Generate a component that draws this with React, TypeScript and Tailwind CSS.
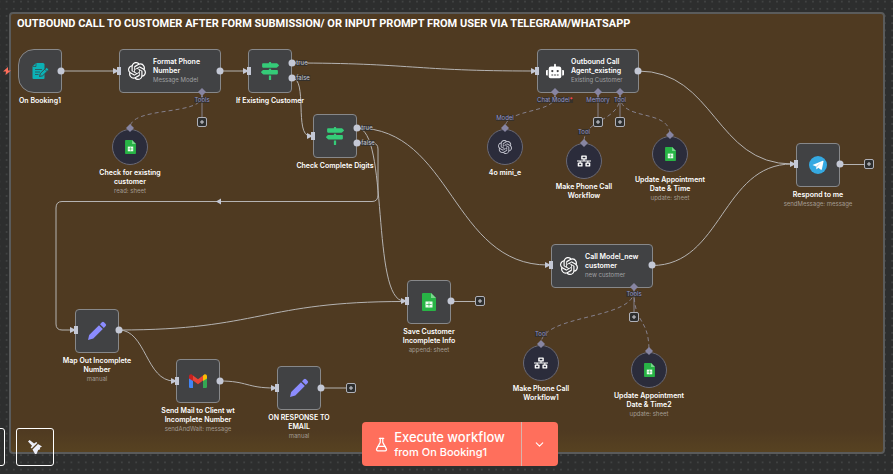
import type { ReactNode } from "react";
import { FaMapSigns, FaNetworkWired, FaRobot } from "react-icons/fa";
import { SiOpenai } from "react-icons/si";
import { ChevronDown, FlaskConical } from "lucide-react";

type Point = { x: number; y: number };

function FormIcon() {
  return (
    <svg viewBox="0 0 18 18" className="size-[18px]" aria-hidden="true">
      <path d="M5 1h7a1.500 1.500 0 0 1 1.500 1.500V16a1 1 0 0 1-1 1h-10a1 1 0 0 1-1-1V4.500z" fill="#0bb1b5" />
      <path d="M1.500 4.500H5V1" stroke="#414244" strokeWidth=".7" fill="none" />
      <path d="M4 7.500h7M4 10h5M4 12.500h3.500" stroke="#2c5f64" strokeWidth="1" />
      <path d="M8.500 14.500l.8-3 5.700-5.600a1 1 0 0 1 1.400 0l.9.900a1 1 0 0 1 0 1.400l-5.700 5.600z" fill="#0bb1b5" stroke="#414244" strokeWidth=".9" />
      <path d="M13.600 7.100l2.400 2.400" stroke="#414244" strokeWidth=".8" />
    </svg>
  );
}

function BroomIcon() {
  return (
    <svg viewBox="0 0 14 14" className="size-[14px]" fill="currentColor" aria-hidden="true">
      <path d="M0 1.600L1.600 0l4.500 3.600L8.300 2l1 1-5.600 5.600-1-1 1.300-1.900z" />
      <path d="M4.500 9.400L10 3.900l4 2.600-2.200 1.200.4 1.600-2 .8-1.700 3.900H7z" />
    </svg>
  );
}

function BoltIcon() {
  return (
    <svg viewBox="0 0 8 8" className="absolute top-[67px] left-[3px] size-2" fill="#ff6d5a" aria-hidden="true">
      <path d="M5 0L0 4.500h3L2.500 8 8 3.500H5z" />
    </svg>
  );
}

function SheetIcon({ size }: { size: "small" | "large" }) {
  return (
    <svg viewBox="0 0 14 18" className={size === "small" ? "h-[14px] w-[11px]" : "h-[18px] w-[14px]"} aria-hidden="true">
      <path d="M1 0h8l5 5v12a1 1 0 0 1-1 1H1a1 1 0 0 1-1-1V1a1 1 0 0 1 1-1z" fill="#28b446" />
      <path d="M9 0l5 5H9z" fill="#7bd68d" />
      <path d="M3.500 8.500h7V14.500h-7z" fill="#f0fff2" />
      <path d="M4.300 11.500h5.400M7 9.300v4.400" stroke="#28b446" strokeWidth=".7" />
    </svg>
  );
}

function PencilIcon() {
  return (
    <svg viewBox="0 0 20 20" className="size-5" fill="#8b8cff" aria-hidden="true">
      <path d="M12 4.200l3.800 3.800L6.300 17.500 1 19l1.200-5z" />
      <path d="M13 3.200l1.900-1.900a1.500 1.500 0 0 1 2.100 0l1.700 1.700a1.500 1.500 0 0 1 0 2.100L16.800 7z" />
    </svg>
  );
}

function GmailIcon() {
  return (
    <svg viewBox="0 0 18 14" className="h-[14px] w-[18px]" aria-hidden="true">
      <path d="M0 3v9.500A1.300 1.300 0 0 0 1.300 14H4V6z" fill="#4285f4" />
      <path d="M14 6v8h2.700a1.300 1.300 0 0 0 1.300-1.300V3z" fill="#34a853" />
      <path d="M4 1.500l5 3.800 5-3.800V6.400l-5 3.800-5-3.800z" fill="#ea4335" />
      <path d="M0 2.500v2L4 7V1.500L3 .7C1.700-.3 0 .7 0 2.500z" fill="#c5221f" />
      <path d="M14 1.500V7l4-2.500v-2c0-1.800-1.700-2.800-3-1.800z" fill="#fbbc04" />
    </svg>
  );
}

function TelegramIcon() {
  return (
    <svg viewBox="0 0 18 18" className="size-[18px]" aria-hidden="true">
      <circle cx="9" cy="9" r="9" fill="#35a9e2" />
      <path d="M3.500 8.900l10.300-4.200c.5-.2.900.1.700.9l-1.600 7.700c-.1.600-.5.700-1 .4l-2.600-1.900-1.300 1.300c-.3.300-.7.200-.7-.3L7 10.400z" fill="#fff" />
      <path d="M7 10.300l4.900-3.500-3.800 4.100-.7 2.200z" fill="#b5d9ee" />
    </svg>
  );
}

const sign = <FaMapSigns className="size-[18px] text-[#35cb78]" />;
const openai = <SiOpenai className="size-[18px] shrink-0 text-white" />;
const network = <FaNetworkWired className="size-[14px] text-white" />;

type Item = Point & { title: string; sub?: string; icon: ReactNode };

/* x and y are the centre of each node on the canvas */
const squares: (Item & { trigger?: boolean })[] = [
  { x: 40, y: 71, title: "On Booking1", icon: <FormIcon />, trigger: true },
  { x: 270, y: 71, title: "If Existing Customer", icon: sign },
  { x: 335, y: 136, title: "Check Complete Digits", icon: sign },
  { x: 818, y: 165, title: "Respond to me", sub: "sendMessage: message", icon: <TelegramIcon /> },
  { x: 97, y: 331, title: "Map Out Incomplete Number", sub: "manual", icon: <PencilIcon /> },
  { x: 198, y: 381, title: "Send Mail to Client wt Incomplete Number", sub: "sendAndWait: message", icon: <GmailIcon /> },
  { x: 299, y: 388, title: "ON RESPONSE TO EMAIL", sub: "manual", icon: <PencilIcon /> },
  { x: 429, y: 302, title: "Save Customer Incomplete Info", sub: "append: sheet", icon: <SheetIcon size="large" /> },
];

const wides: Item[] = [
  { x: 170, y: 71, title: "Format Phone Number", sub: "Message Model", icon: openai },
  { x: 588, y: 71, title: "Outbound Call Agent_existing", sub: "Existing Customer", icon: <FaRobot className="size-[18px] shrink-0 text-white" /> },
  { x: 602, y: 266, title: "Call Model_new customer", sub: "new customer", icon: openai },
];

const circles: Item[] = [
  { x: 130, y: 147, title: "Check for existing customer", sub: "read: sheet", icon: <SheetIcon size="small" /> },
  { x: 505, y: 147, title: "4o mini_e", icon: <SiOpenai className="size-[14px] text-[#c4c5d0]" /> },
  { x: 584, y: 161, title: "Make Phone Call Workflow", icon: network },
  { x: 670, y: 154, title: "Update Appointment Date & Time", sub: "update: sheet", icon: <SheetIcon size="small" /> },
  { x: 541, y: 363, title: "Make Phone Call Workflow1", icon: network },
  { x: 649, y: 370, title: "Update Appointment Date & Time2", sub: "update: sheet", icon: <SheetIcon size="small" /> },
];

const edges = [
  "M61 71H119",
  "M220 71H249",
  "M292 63C412 63 412 71 534 71",
  "M292 78C308 78 294 136 310 136",
  "M357 128C452 128 452 265 548 265",
  "M357 128C389 128 371 301 404 301",
  "M357 143H372Q378 143 378 149V195Q378 201.500 372 201.500H62Q56 201.500 56 208V324Q56 330 62 330H73",
  "M638 71C715 71 715 164 792 164",
  "M652 265.500C722 265.500 722 164 792 164",
  "M119 330C260 330 262 301.500 404 301.500",
  "M119 330C146 330 146 381 174 381",
  "M220 381C247 381 247 388 274 388",
  "M451 301.500H476",
  "M321 388H346",
  "M840 164.500H865",
];

const dashedEdges = [
  "M202 96C202 116 130 106 130 128",
  "M555 96C555 114 505 108 505 128",
  "M620 96C620 122 584 118 584 142",
  "M620 96C620 122 670 108 670 135",
  "M634 291C634 320 541 314 541 344",
  "M634 291C634 325 649 317 649 351",
];

const inputs: Point[] = [
  { x: 119, y: 71 }, { x: 249, y: 71 }, { x: 313, y: 136 }, { x: 537, y: 71 }, { x: 551, y: 265 },
  { x: 796, y: 164 }, { x: 76, y: 330 }, { x: 177, y: 381 }, { x: 277, y: 388 }, { x: 407, y: 301 },
];

const outputs: Point[] = [
  { x: 61, y: 71 }, { x: 220, y: 71 }, { x: 292, y: 63 }, { x: 292, y: 78 }, { x: 357, y: 128 },
  { x: 357, y: 143 }, { x: 638, y: 71 }, { x: 652, y: 265 }, { x: 840, y: 164 }, { x: 119, y: 330 },
  { x: 220, y: 381 }, { x: 321, y: 388 }, { x: 451, y: 301 },
];

const diamonds: Point[] = [
  { x: 202, y: 92 }, { x: 130, y: 128 }, { x: 555, y: 92 }, { x: 598, y: 92 }, { x: 620, y: 92 }, { x: 505, y: 128 },
  { x: 584, y: 143 }, { x: 670, y: 135 }, { x: 634, y: 287 }, { x: 541, y: 344 }, { x: 649, y: 351 },
];

const plusStems: Point[] = [{ x: 202, y: 92 }, { x: 598, y: 92 }, { x: 620, y: 92 }, { x: 634, y: 287 }];

const pluses: Point[] = [
  { x: 202, y: 122 }, { x: 598, y: 122 }, { x: 620, y: 122 }, { x: 634, y: 317 },
  { x: 480, y: 301 }, { x: 351, y: 388 }, { x: 869, y: 164 },
];

const portLabels: (Point & { text: string; required?: boolean })[] = [
  { x: 202, y: 100, text: "Tools" },
  { x: 555, y: 100, text: "Chat Model", required: true },
  { x: 598, y: 100, text: "Memory" },
  { x: 620, y: 100, text: "Tool" },
  { x: 505, y: 118, text: "Model" },
  { x: 584, y: 132, text: "Tool" },
  { x: 541, y: 334, text: "Tool" },
  { x: 634, y: 294, text: "Tools" },
];

const branchLabels: (Point & { text: string })[] = [
  { x: 302, y: 63, text: "true" },
  { x: 303, y: 78, text: "false" },
  { x: 367, y: 128, text: "true" },
  { x: 368, y: 143, text: "false" },
];

function Caption({ title, sub }: { title: string; sub?: string }) {
  return (
    <div className="mt-[3px] text-center">
      <p className="text-[7px] leading-[9px] font-semibold text-white">{title}</p>
      {sub && <p className="text-[6px] leading-[10px] whitespace-nowrap text-[#a39c93]">{sub}</p>}
    </div>
  );
}

function Connections() {
  return (
    <svg className="absolute inset-0 size-full" fill="none" aria-hidden="true">
      <g stroke="#b5b3b2" strokeWidth="1">
        {edges.map((d) => <path key={d} d={d} />)}
      </g>
      <g stroke="#85808c" strokeWidth="1" strokeDasharray="4 3">
        {dashedEdges.map((d) => <path key={d} d={d} />)}
      </g>
      {plusStems.map((p) => (
        <path key={p.x} d={`M${p.x} ${p.y}v26`} stroke="#85808c" />
      ))}
      <path d="M216 201.500l5-3v6z" fill="#c4c8d5" />
    </svg>
  );
}

function Ports() {
  return (
    <svg className="pointer-events-none absolute inset-0 size-full" aria-hidden="true">
      <g fill="#c4c8d5">
        {inputs.map((p) => (
          <path key={`${p.x}-${p.y}`} d={`M${p.x - 2} ${p.y - 4}h4v8h-4v-3l-4 2v-6l4 2z`} />
        ))}
        {outputs.map((p) => <circle key={`${p.x}-${p.y}`} cx={p.x} cy={p.y} r="3.500" />)}
      </g>
      <g fill="#8785a2">
        {diamonds.map((p) => (
          <path key={`${p.x}-${p.y}`} d={`M${p.x} ${p.y - 4}l4 4-4 4-4-4z`} />
        ))}
        {plusStems.map((p) => (
          <path key={p.x} d={`M${p.x} ${p.y + 3}l2 4h-4z`} />
        ))}
        <path d="M555 95l2 4h-4z" />
      </g>
    </svg>
  );
}

function CanvasDots() {
  return (
    <svg className="absolute inset-0 size-full" aria-hidden="true">
      <defs>
        <pattern id="dots" width="16" height="16" patternUnits="userSpaceOnUse" patternTransform="translate(3 -2) scale(.45)">
          <circle cx="8" cy="8" r="1.500" fill="#5c5d5d" />
        </pattern>
      </defs>
      <rect width="100%" height="100%" fill="url(#dots)" />
    </svg>
  );
}

export default function App() {
  return (
    <main className="relative h-screen w-full overflow-hidden bg-[#2d2e2e] font-['Inter','Liberation_Sans',sans-serif]">
      <CanvasDots />

      <section className="absolute top-3 right-2 bottom-5 left-[9px] rounded-[4px] border-2 border-[#5a5b5b] bg-linear-to-b from-[#4f3a21] from-95% to-[#574221] px-[6px] py-[3px]">
        <h1 className="font-['Roboto','Inter',sans-serif] text-[11px] leading-[14px] font-bold whitespace-nowrap text-white">
          OUTBOUND CALL TO CUSTOMER AFTER FORM SUBMISSION/ OR INPUT PROMPT FROM USER VIA TELEGRAM/WHATSAPP
        </h1>
      </section>

      <Connections />

      <BoltIcon />

      {squares.map((n) => (
        <article key={n.title} className="absolute flex w-[82px] flex-col items-center" style={{ left: n.x - 41, top: n.y - 22 }}>
          <div
            className={
              n.trigger
                ? "flex size-11 items-center justify-center rounded-l-[16px] rounded-r-[4px] border border-[#87888a] bg-[#414244]"
                : "flex size-11 items-center justify-center rounded-[4px] border border-[#87888a] bg-[#414244]"
            }
          >
            {n.icon}
          </div>
          <Caption title={n.title} sub={n.sub} />
        </article>
      ))}

      {wides.map((n) => (
        <article
          key={n.title}
          className="absolute flex h-11 w-[102px] items-center gap-[7px] rounded-[4px] border border-[#87888a] bg-[#414244] pl-2"
          style={{ left: n.x - 51, top: n.y - 22 }}
        >
          {n.icon}
          <div className="w-[62px]">
            <p className="text-[7px] leading-[9px] font-semibold text-white">{n.title}</p>
            <p className="text-[6px] leading-[10px] whitespace-nowrap text-[#a0a1a3]">{n.sub}</p>
          </div>
        </article>
      ))}

      {circles.map((n) => (
        <article key={n.title} className="absolute flex w-20 flex-col items-center" style={{ left: n.x - 40, top: n.y - 18 }}>
          <div className="flex size-9 items-center justify-center rounded-full border border-[#6a6975] bg-[#2b2c3b]">{n.icon}</div>
          <Caption title={n.title} sub={n.sub} />
        </article>
      ))}

      <Ports />

      {portLabels.map((l) => (
        <span
          key={`${l.x}-${l.y}`}
          className="absolute -translate-x-1/2 -translate-y-1/2 bg-[#2d2e2e]/70 text-[6px] leading-[6px] whitespace-nowrap text-[#9496c9]"
          style={{ left: l.x, top: l.y }}
        >
          {l.text}
          {l.required && <span className="font-bold text-[#ff4a4a]">*</span>}
        </span>
      ))}

      {branchLabels.map((l) => (
        <span
          key={`${l.x}-${l.y}`}
          className="absolute -translate-x-1/2 -translate-y-1/2 bg-[#2d2e2e]/80 text-[6px] leading-[6px] text-[#c4c8d5]"
          style={{ left: l.x, top: l.y }}
        >
          {l.text}
        </span>
      ))}

      {pluses.map((p) => (
        <button
          key={`${p.x}-${p.y}`}
          type="button"
          aria-label="Add node"
          className="absolute flex size-[10px] items-center justify-center rounded-[2px] border border-[#b0b1b8] bg-[#2d2e2e] text-[#d0d0d5]"
          style={{ left: p.x - 5, top: p.y - 5 }}
        >
          <svg viewBox="0 0 4 4" className="size-1" aria-hidden="true">
            <path d="M2 0v4M0 2h4" stroke="currentColor" strokeWidth="1" />
          </svg>
        </button>
      ))}

      <div className="absolute inset-x-0 bottom-2 flex items-end justify-center pl-[27px]">
        <div className="absolute bottom-0 -left-[33px] flex gap-[11px]">
          <button type="button" aria-label="Zoom to fit" className="size-[38px] rounded-[3px] border border-white" />
          <button type="button" aria-label="Tidy up workflow" className="flex size-[38px] items-center justify-center rounded-[3px] border border-white text-[#eceef8]">
            <BroomIcon />
          </button>
        </div>
        <div className="flex h-11 overflow-hidden rounded-[4px] bg-[#ff6f5c] text-white">
          <button type="button" className="flex items-center gap-[5px] pr-4 pl-3 text-left">
            <FlaskConical className="size-[15px]" strokeWidth={2} />
            <span className="flex flex-col">
              <span className="text-[13px] leading-[15px] font-medium">Execute workflow</span>
              <span className="text-[11px] leading-[14px] font-medium">from On Booking1</span>
            </span>
          </button>
          <button type="button" aria-label="Choose trigger" className="flex w-[37px] items-center justify-center border-l border-[#d9b3ab]">
            <ChevronDown className="size-[13px]" strokeWidth={2} />
          </button>
        </div>
      </div>
    </main>
  );
}
